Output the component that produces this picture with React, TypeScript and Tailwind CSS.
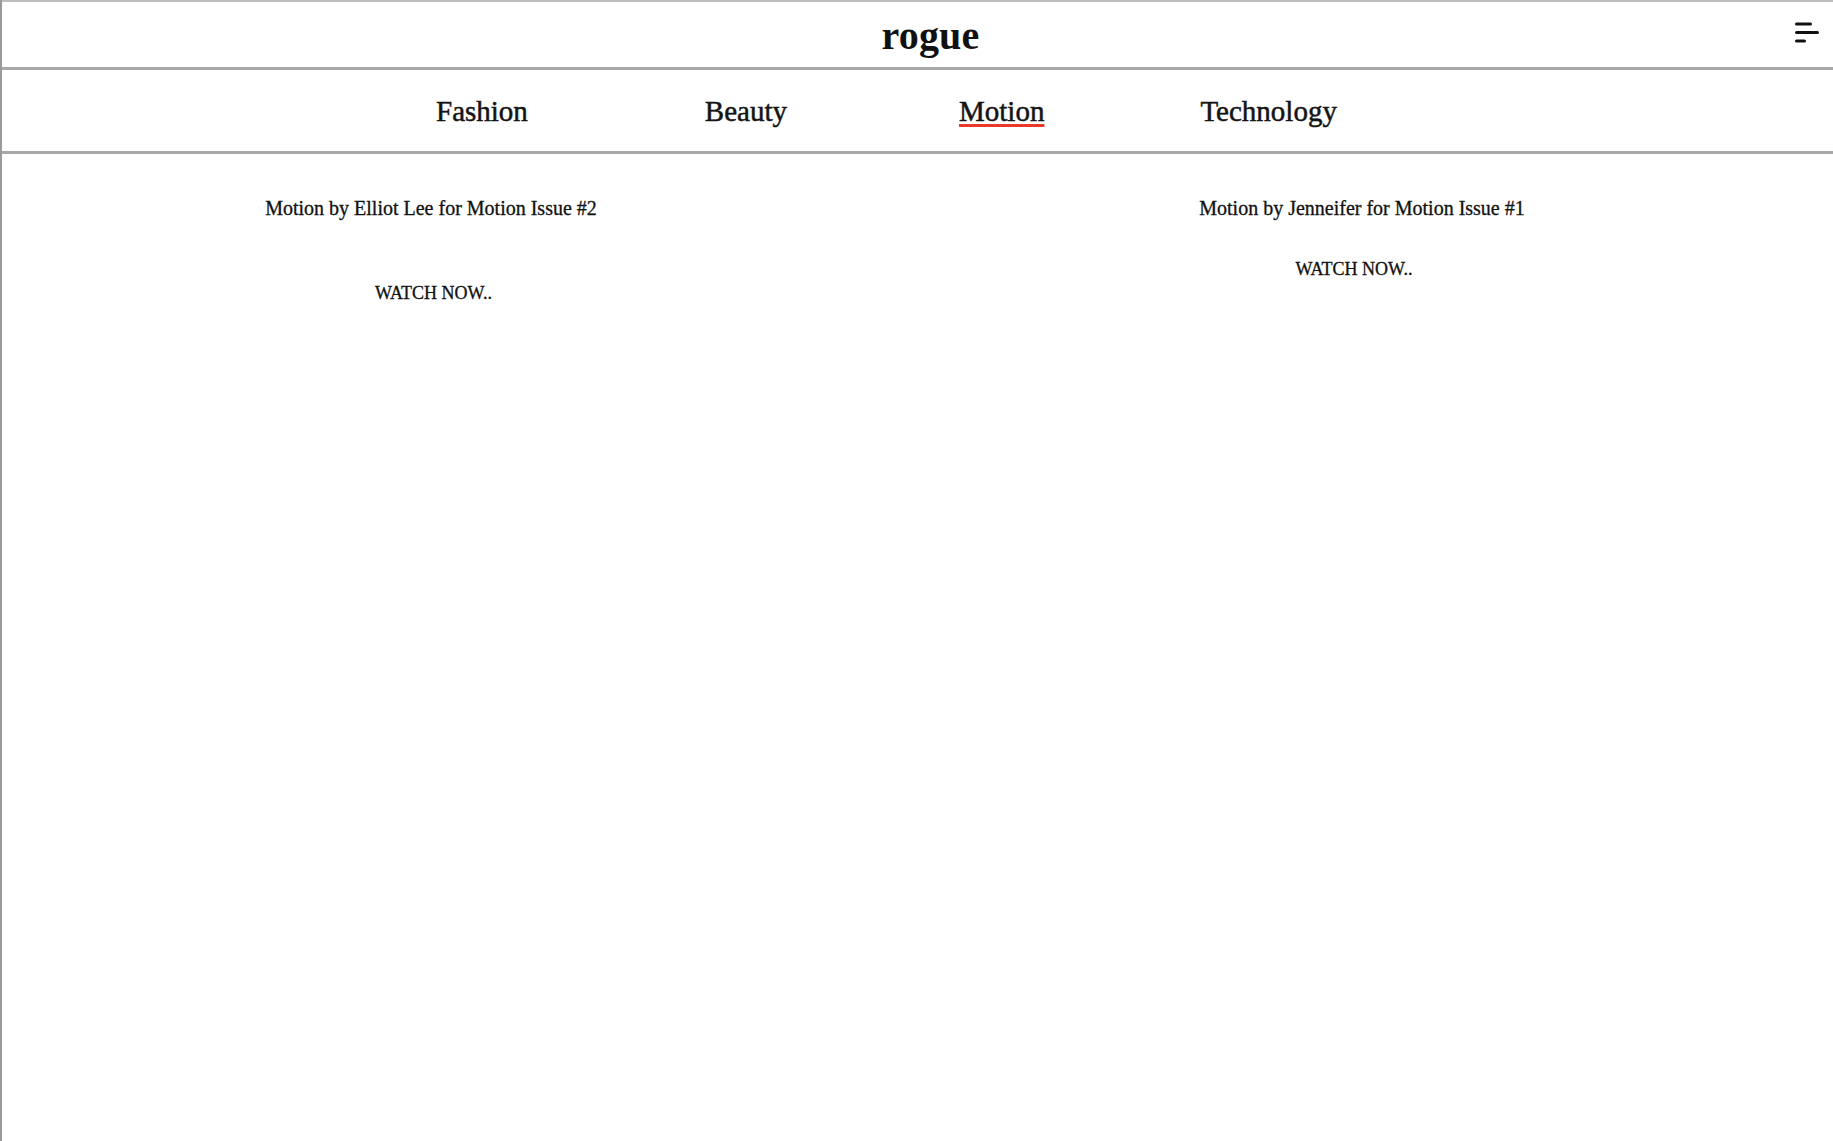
import React from "react";

const serif = { fontFamily: '"Liberation Serif", "Times New Roman", serif' };

const navItems = [
  { label: "Fashion", cls: "" },
  { label: "Beauty", cls: "ml-[177px]" },
  { label: "Motion", cls: "ml-[172px]", active: true },
  { label: "Technology", cls: "ml-[156px]" },
];

const MenuIcon = () => (
  <svg width="24" height="21" viewBox="0 0 24 21" fill="none">
    <line x1="1.5" y1="2" x2="15.5" y2="2" stroke="#111" strokeWidth="3" strokeLinecap="round" />
    <line x1="1.5" y1="10.5" x2="22.5" y2="10.5" stroke="#111" strokeWidth="3" strokeLinecap="round" />
    <line x1="1.5" y1="19" x2="9.5" y2="19" stroke="#111" strokeWidth="3" strokeLinecap="round" />
  </svg>
);

export default function App() {
  return (
    <div className="min-h-[1141px] w-full bg-white border-l-2 border-[#9a9a9a] text-[#111]" style={serif}>
      {/* header */}
      <header className="grid grid-cols-[1fr_auto_1fr] items-center border-t-2 border-b-[3px] border-t-[#bdbdbd] border-b-[#a8a8a8] h-[70px]">
        <div />
        <h1 className="pl-[26px] pt-[2px] text-[40px] font-bold leading-[44px] tracking-[0.2px]">rogue</h1>
        <div className="flex justify-end pr-[14px] pb-[4px]">
          <button className="p-0">
            <MenuIcon />
          </button>
        </div>
      </header>

      {/* nav */}
      <nav className="border-b-[3px] border-[#a8a8a8]">
        <ul className="flex pl-[434px] pt-[25px] pb-[23px]">
          {navItems.map((item) => (
            <li key={item.label} className={item.cls}>
              <a
                href="#"
                className={
                  "text-[29px] leading-[32px] text-[#141414] [-webkit-text-stroke:0.5px_#141414] " +
                  (item.active ? "underline decoration-[#e8392b] decoration-[3px] underline-offset-[3px]" : "")
                }
              >
                {item.label}
              </a>
            </li>
          ))}
        </ul>
      </nav>

      {/* videos */}
      <section className="flex pl-[129px] gap-[329px] pt-[43px] [-webkit-text-stroke:0.3px_#111]">
        <div className="w-[600px] text-center">
          <h3 className="text-[20px] leading-[22px]">Motion by Elliot Lee for Motion Issue #2</h3>
          <p className="mt-[64px] text-[18px] leading-[20px] pl-[5px]">WATCH NOW..</p>
        </div>
        <div className="w-[600px] text-center">
          <h3 className="text-[20px] leading-[22px] pl-[4px]">Motion by Jenneifer for Motion Issue #1</h3>
          <p className="mt-[40px] text-[18px] leading-[20px] pr-[12px]">WATCH NOW..</p>
        </div>
      </section>
    </div>
  );
}
